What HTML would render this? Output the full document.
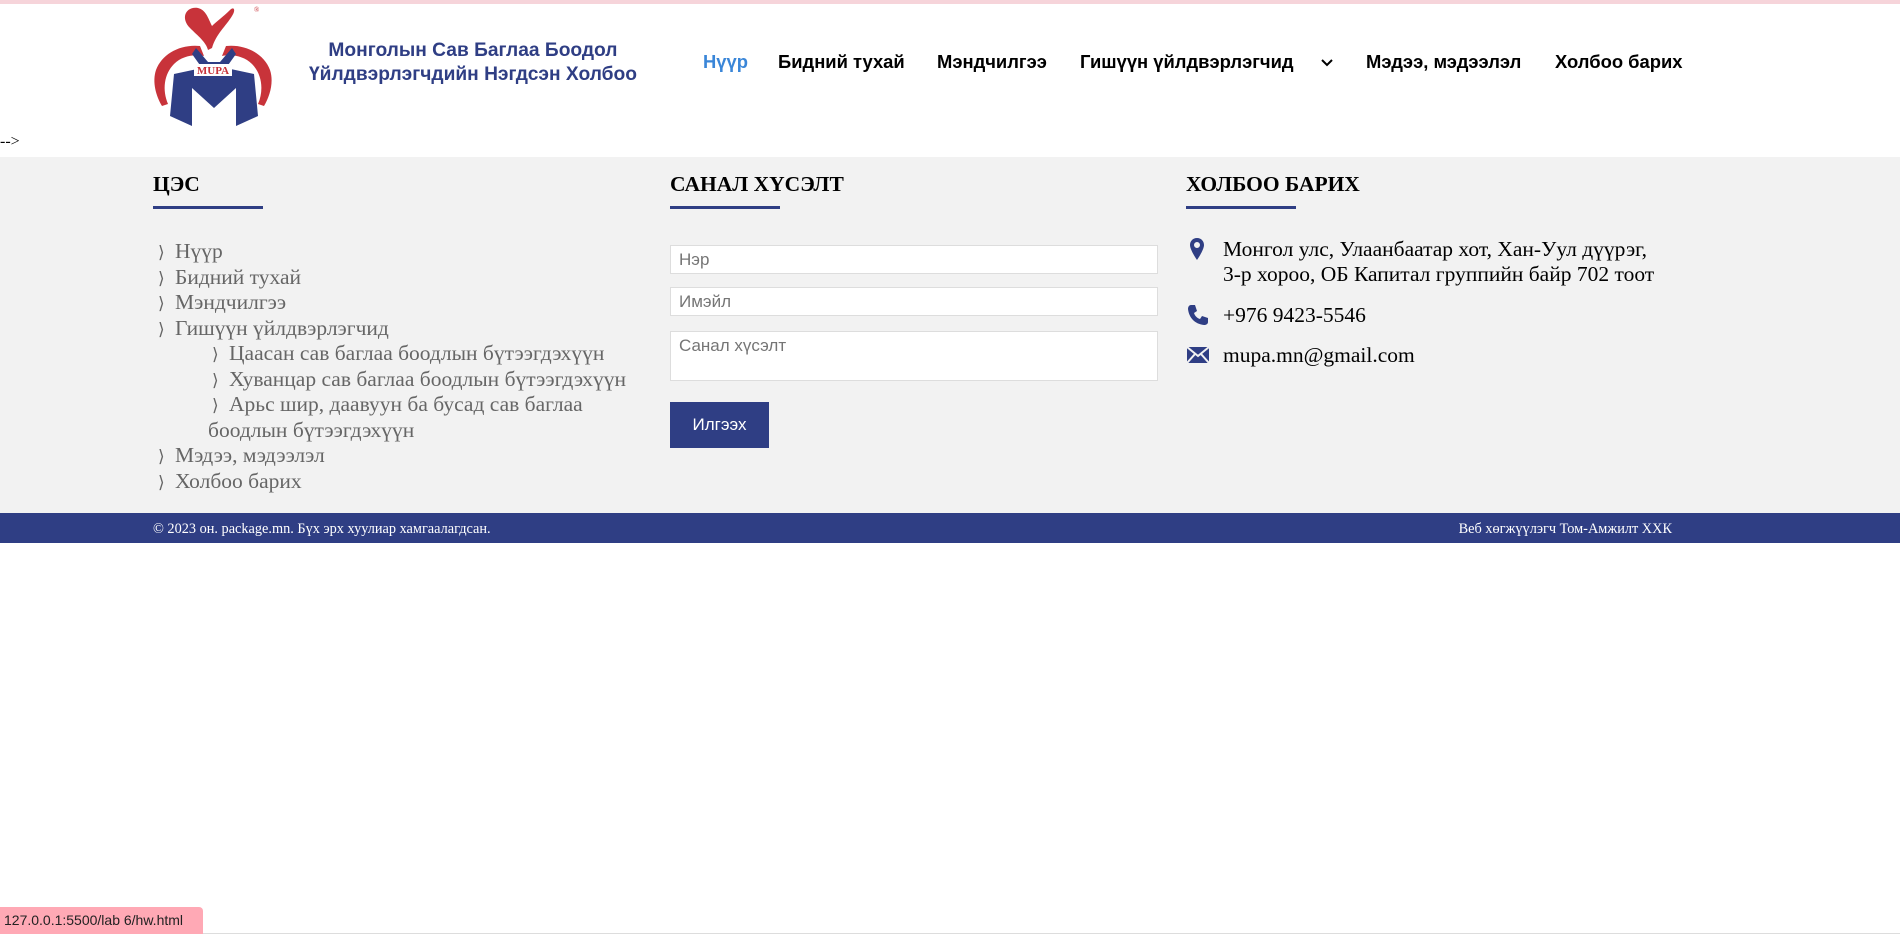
<!DOCTYPE html>
<html><head><meta charset="utf-8">
<style>
*{box-sizing:border-box;margin:0;padding:0}
body{width:1900px;height:936px;background:#fff;position:relative;overflow:hidden;font-family:"Liberation Serif",serif}
.abs{position:absolute;white-space:nowrap}
.topline{position:absolute;left:0;top:0;width:1900px;height:4px;background:#f6d4da}
.title{left:309px;top:39px;font:bold 19.2px/24px "Liberation Sans",sans-serif;color:#2f3e84;text-align:center}
.nav{top:51px;font:bold 18.4px "Liberation Sans",sans-serif;color:#000}
.gray{position:absolute;left:0;top:157px;width:1900px;height:356px;background:#f2f2f2}
h3{position:absolute;font:bold 21.5px "Liberation Serif",serif;color:#000;top:172px}
.ul{position:absolute;top:206px;width:110px;height:3px;background:#2f3e84}
.menu{position:absolute;left:158px;top:239px;font:21.5px/25.5px "Liberation Serif",serif;color:#666}
.menu div{white-space:nowrap;height:25.5px;line-height:25.5px}
.ch{font-family:"DejaVu Sans",sans-serif;font-size:17px;line-height:10px;display:inline-block;width:17px}
.inp{position:absolute;left:670px;width:488px;background:#fff;border:1px solid #ddd;font:17px "Liberation Sans",sans-serif;color:#757575;padding:4px 8px}
.btn{position:absolute;left:670px;top:402px;width:99px;height:46px;background:#2f3e84;color:#fff;font:17px/46px "Liberation Sans",sans-serif;text-align:center}
.ct{position:absolute;left:1223px;font:21.5px/25px "Liberation Serif",serif;color:#000}
.foot{position:absolute;left:0;top:513px;width:1900px;height:30px;background:#2f3e84;color:#fff;font:14.3px/32px "Liberation Serif",serif}
.status{position:absolute;left:0;top:907px;width:203px;height:27px;background:#ffa9b5;border-top-right-radius:4px;font:14px/27px "Liberation Sans",sans-serif;color:#222;padding-left:4px}
</style></head><body>
<div class="topline"></div>
<svg class="abs" style="left:150px;top:4px" width="140" height="122" viewBox="0 0 140 122">
 <path d="M48 4 C36 2 30 14 40 24 C48 32 56 38 58 46 L62 44 C66 30 76 22 82 12 C86 6 84 2 80 6 C74 12 66 18 62 22 C58 14 56 6 48 4Z" fill="#c8333a"/>
 <path d="M50 42 C30 40 12 50 6 66 C2 78 6 92 12 102 L18 100 C12 86 14 70 24 60 C32 52 44 50 54 52Z" fill="#c8333a"/>
 <path d="M76 42 C96 40 114 50 120 66 C124 78 120 92 114 102 L108 100 C114 86 112 70 102 60 C94 52 82 50 72 52Z" fill="#c8333a"/>
 <path d="M46 44 L58 58 L70 58 L82 44 L86 50 L76 64 L104 70 L108 112 L86 122 L86 84 L64 104 L42 84 L42 122 L20 112 L24 70 L52 64 L42 50Z" fill="#2f3e84"/>
 <rect x="44" y="60" width="38" height="12" fill="#fff"/>
 <text x="63" y="70" font-family="Liberation Serif" font-size="11" font-weight="bold" fill="#c8333a" text-anchor="middle">MUPA</text>
 <text x="104" y="8" font-size="7" fill="#c8333a">®</text>
</svg>
<div class="abs title">Монголын Сав Баглаа Боодол<br>Үйлдвэрлэгчдийн Нэгдсэн Холбоо</div>
<div class="abs nav" style="left:703px;color:#3a86d8">Нүүр</div>
<div class="abs nav" style="left:778px">Бидний тухай</div>
<div class="abs nav" style="left:937px">Мэндчилгээ</div>
<div class="abs nav" style="left:1080px">Гишүүн үйлдвэрлэгчид</div>
<svg class="abs" style="left:1320px;top:58px" width="14" height="10" viewBox="0 0 14 10"><path d="M2 2 L7 7 L12 2" stroke="#000" stroke-width="2" fill="none"/></svg>
<div class="abs nav" style="left:1366px">Мэдээ, мэдээлэл</div>
<div class="abs nav" style="left:1555px">Холбоо барих</div>
<div class="abs" style="left:0;top:133px;font:16px 'Liberation Serif',serif">--&gt;</div>
<div class="gray"></div>
<h3 style="left:153px">ЦЭС</h3><div class="ul" style="left:153px"></div>
<h3 style="left:670px">САНАЛ ХҮСЭЛТ</h3><div class="ul" style="left:670px"></div>
<h3 style="left:1186px">ХОЛБОО БАРИХ</h3><div class="ul" style="left:1186px"></div>
<div class="menu">
<div><span class="ch">⟩</span>Нүүр</div><div><span class="ch">⟩</span>Бидний тухай</div><div><span class="ch">⟩</span>Мэндчилгээ</div><div><span class="ch">⟩</span>Гишүүн үйлдвэрлэгчид</div>
<div style="padding-left:54px"><span class="ch">⟩</span>Цаасан сав баглаа боодлын бүтээгдэхүүн</div>
<div style="padding-left:54px"><span class="ch">⟩</span>Хуванцар сав баглаа боодлын бүтээгдэхүүн</div>
<div style="padding-left:54px"><span class="ch">⟩</span>Арьс шир, даавуун ба бусад сав баглаа</div>
<div style="padding-left:50px">боодлын бүтээгдэхүүн</div>
<div><span class="ch">⟩</span>Мэдээ, мэдээлэл</div><div><span class="ch">⟩</span>Холбоо барих</div>
</div>
<div class="inp" style="top:245px;height:29px">Нэр</div>
<div class="inp" style="top:287px;height:29px">Имэйл</div>
<div class="inp" style="top:331px;height:50px">Санал хүсэлт</div>
<div class="btn">Илгээх</div>
<svg class="abs" style="left:1189px;top:237px" width="16" height="24" viewBox="0 0 16 24"><path d="M8 1 C3.5 1 1 4.5 1 8 C1 13 8 23 8 23 C8 23 15 13 15 8 C15 4.5 12.5 1 8 1Z M8 5 A3 3 0 1 0 8 11 A3 3 0 1 0 8 5Z" fill="#2f3e84" fill-rule="evenodd"/></svg>
<div class="ct" style="top:237px">Монгол улс, Улаанбаатар хот, Хан-Уул дүүрэг,<br>3-р хороо, ОБ Капитал группийн байр 702 тоот</div>
<svg class="abs" style="left:1187px;top:304px" width="22" height="22" viewBox="0 0 22 22"><path d="M4 1 L8 1 L10 7 L7 9 C8 12 10 14 13 15 L15 12 L21 14 L21 18 C21 20 19 21 17 21 C8 20 2 14 1 5 C1 3 2 1 4 1Z" fill="#2f3e84"/></svg>
<div class="ct" style="top:303px">+976 9423-5546</div>
<svg class="abs" style="left:1187px;top:347px" width="22" height="16" viewBox="0 0 22 16"><rect width="22" height="16" fill="#2f3e84"/><path d="M0 0 L11 9 L22 0 M0 16 L8 7 M22 16 L14 7" stroke="#f2f2f2" stroke-width="2" fill="none"/></svg>
<div class="ct" style="top:343px">mupa.mn@gmail.com</div>
<div class="foot"><span class="abs" style="left:153px">© 2023 он. package.mn. Бүх эрх хуулиар хамгаалагдсан.</span><span class="abs" style="right:228px">Веб хөгжүүлэгч Том-Амжилт ХХК</span></div>
<div class="status">127.0.0.1:5500/lab 6/hw.html</div>
<div style="position:absolute;left:203px;top:933px;width:1697px;height:1px;background:#ddd"></div>
</body></html>
